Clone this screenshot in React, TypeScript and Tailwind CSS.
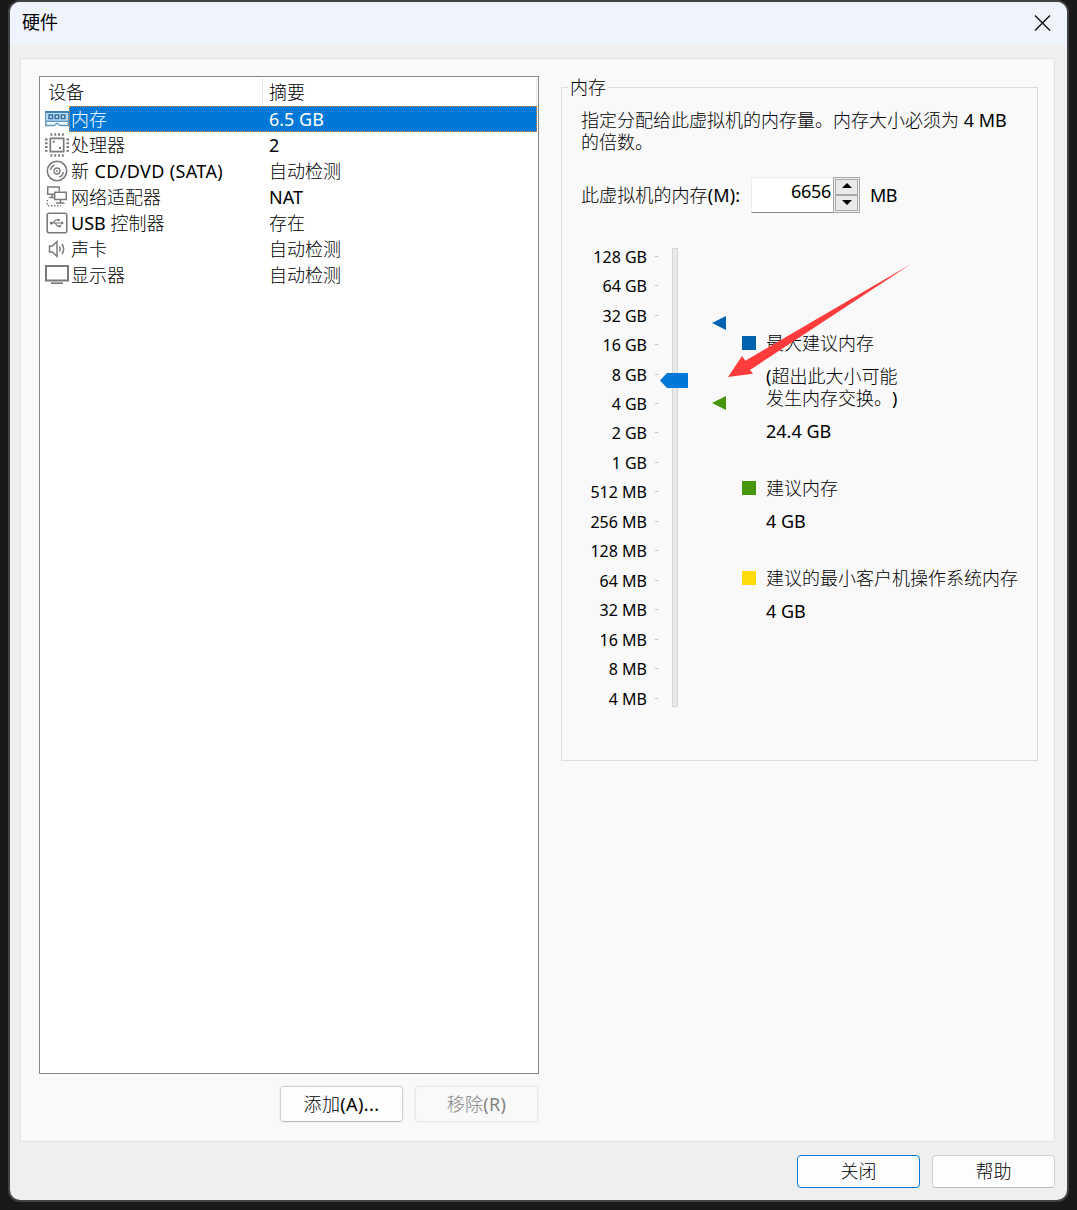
import { useState, type ReactNode } from 'react';

const SCALE = [
  '128 GB', '64 GB', '32 GB', '16 GB', '8 GB', '4 GB', '2 GB', '1 GB',
  '512 MB', '256 MB', '128 MB', '64 MB', '32 MB', '16 MB', '8 MB', '4 MB',
];

type Device = { name: string; summary: string; icon: ReactNode };

// Chinese runs are set lighter than the Latin text around them
function Label({ text }: { text: string }) {
  return (
    <>
      {text.split(/([\u3000-\u9fff]+)/).map((part, i) =>
        i % 2 ? (
          <span key={i} className="font-light">{part}</span>
        ) : (
          part
        )
      )}
    </>
  );
}

function MemoryIcon() {
  return (
    <svg width="24" height="26" viewBox="0 0 24 26" className="block">
      <path d="M.7 6h22.600v13.500h-8.300l-3-2.200-3 2.200H.7z" fill="#f4f9fc" stroke="#5f97c0" strokeWidth="1.400" />
      <path d="M0 5h24v2H0z" fill="#3f83b8" />
      <path d="M1.400 7h21.200v7.500H1.400z" fill="#b9dcf3" />
      <path d="M0 14.500h24V16H0z" fill="#5b9ac6" />
      <path d="M4 9h3.500v3.500H4zM10.200 9h3.500v3.500h-3.500zM16.400 9h3.500v3.500h-3.500z" fill="#d5ebf9" stroke="#34709f" strokeWidth="1.500" />
    </svg>
  );
}

function CpuIcon() {
  return (
    <svg width="24" height="26" viewBox="0 0 24 26" className="block" fill="none" stroke="#7b7b7b">
      <path d="M5.300 6.300h13.400v13.400H5.300z" strokeWidth="1.700" />
      <path d="M5.500 2.500h13.500M5.500 23.500h13.500" strokeWidth="2.600" strokeDasharray="1.900 1.900" />
      <path d="M1.300 6.500v13.500M22.700 6.500v13.500" strokeWidth="2.600" strokeDasharray="1.900 1.900" />
      <path d="M7.800 8.800h2v2h-2zM14 15h2v2h-2z" fill="#7b7b7b" stroke="none" />
    </svg>
  );
}

function DiscIcon() {
  return (
    <svg width="24" height="26" viewBox="0 0 24 26" className="block" fill="none" stroke="#7b7b7b" strokeWidth="1.600">
      <circle cx="12" cy="13" r="9.700" />
      <circle cx="12" cy="13" r="3" strokeWidth="1.300" />
      <circle cx="12" cy="13" r=".9" fill="#7b7b7b" stroke="none" />
      <path d="M5.500 11.800a6.700 6.700 0 0 1 4.200-5M18.500 14.200a6.700 6.700 0 0 1-4.200 5" strokeWidth="1.400" />
    </svg>
  );
}

function NetworkIcon() {
  return (
    <svg width="24" height="26" viewBox="0 0 24 26" className="block" fill="none" stroke="#7b7b7b" strokeWidth="1.500">
      <path d="M9 10.300H2.700V3h11.600v4.500M7 10.300v3M4 13.600h5" />
      <path d="M9.700 8.300h11.600v7.300H9.700zM15.500 15.600v3M11 18.900h8.500" />
      <path d="M2.300 16v5.700H16" strokeDasharray="1.500 1.600" />
    </svg>
  );
}

function UsbIcon() {
  return (
    <svg width="24" height="26" viewBox="0 0 24 26" className="block" fill="none" stroke="#7b7b7b">
      <rect x="2.200" y="3.200" width="19.600" height="19.600" rx="2" strokeWidth="1.600" />
      <path d="M6 13h11M8 13l2.500-3h3M10 13l2.500 3.200h2" strokeWidth="1.200" />
      <circle cx="6.300" cy="13" r="1.600" fill="#7b7b7b" stroke="none" />
      <circle cx="13.500" cy="10" r="1.300" fill="#7b7b7b" stroke="none" />
      <path d="M13.700 15h2.300v2.300h-2.300zM16.200 11l2.800 2-2.800 2z" fill="#7b7b7b" stroke="none" />
    </svg>
  );
}

function SoundIcon() {
  return (
    <svg width="24" height="26" viewBox="0 0 24 26" className="block" fill="none" stroke="#7b7b7b" strokeWidth="1.500">
      <path d="M4.500 10h3l4.500-4.500v15L7.500 16h-3z" />
      <path d="M14.500 10.300q1.600 2.700 0 5.400M17 8q3.300 5 0 10" />
    </svg>
  );
}

function DisplayIcon() {
  return (
    <svg width="24" height="26" viewBox="0 0 24 26" className="block" fill="none" stroke="#7b7b7b">
      <path d="M1 4h22v14.500H1z" strokeWidth="2" />
      <path d="M6 21.200h12" strokeWidth="1.700" />
    </svg>
  );
}

const DEVICES: Device[] = [
  { name: '内存', summary: '6.5 GB', icon: <MemoryIcon /> },
  { name: '处理器', summary: '2', icon: <CpuIcon /> },
  { name: '新 CD/DVD (SATA)', summary: '自动检测', icon: <DiscIcon /> },
  { name: '网络适配器', summary: 'NAT', icon: <NetworkIcon /> },
  { name: 'USB 控制器', summary: '存在', icon: <UsbIcon /> },
  { name: '声卡', summary: '自动检测', icon: <SoundIcon /> },
  { name: '显示器', summary: '自动检测', icon: <DisplayIcon /> },
];

function DeviceList({ selected, onSelect }: { selected: number; onSelect: (i: number) => void }) {
  return (
    <div className="h-[998px] w-[500px] border border-[#828790] bg-white">
      <div className="flex h-[29px] pt-px pr-px leading-[29px]">
        <div className="w-[223px] border-r border-[#e5e5e5] pl-2"><Label text="设备" /></div>
        <div className="flex-1 border-r border-[#e5e5e5] pl-1.5"><Label text="摘要" /></div>
      </div>
      {DEVICES.map((d, i) => (
        <div key={d.name} className="flex h-[26px] pr-px pl-[5px] leading-[26px]" onClick={() => onSelect(i)}>
          <div className="w-6 shrink-0">{d.icon}</div>
          <div
            className={
              i === selected
                ? 'flex flex-1 bg-[#0078d7] text-white outline-1 -outline-offset-1 outline-dotted outline-[#ff8728]'
                : 'flex flex-1'
            }
          >
            <div className={d.name.includes('CD') ? 'w-[200px] pl-0.5 tracking-[0.36px] whitespace-nowrap' : 'w-[200px] pl-0.5 whitespace-nowrap'}>
              <Label text={d.name} />
            </div>
            <div className="whitespace-nowrap"><Label text={d.summary} /></div>
          </div>
        </div>
      ))}
    </div>
  );
}

function Spinner({ value, onChange }: { value: number; onChange: (v: number) => void }) {
  return (
    <div className="flex h-9 w-[109px] border-t border-b border-l border-t-[#ececec] border-b-[#868686] border-l-[#ececec] bg-white">
      <div className="flex-1 pr-0.5 text-right leading-[27px] tracking-[-0.3px]">{value}</div>
      <div className="-my-px flex h-9 w-[27px] flex-col border border-[#a8a8a8] bg-[#f0f0f0] p-px">
        <button type="button" onClick={() => onChange(value + 4)} className="flex flex-1 items-center justify-center border border-[#a8a8a8] bg-[#eaeaea]">
          <svg width="10" height="5" viewBox="0 0 10 5" className="mb-1"><path d="M5 0l5 5H0z" /></svg>
        </button>
        <button type="button" onClick={() => onChange(value - 4)} className="flex flex-1 items-center justify-center border border-[#a8a8a8] bg-[#eaeaea]">
          <svg width="10" height="5" viewBox="0 0 10 5" className="mb-0.5"><path d="M5 5l5-5H0z" /></svg>
        </button>
      </div>
    </div>
  );
}

function MemorySlider() {
  return (
    <div className="flex">
      <div className="w-[77px] text-right text-base">
        {SCALE.map((s) => (
          <div key={s} className="flex h-[29.467px] items-center justify-end">
            <span className="w-[66px] leading-5 whitespace-nowrap">{s}</span>
            <span className="-mt-px ml-2 h-px w-[3px] shrink-0 bg-[#c4c4c4]" />
          </div>
        ))}
      </div>
      <div className="relative mt-[6px] ml-[14px] h-[459px] w-1.5 border border-[#d6d6d6] bg-[#e7eaea]">
        <svg width="28" height="15" viewBox="0 0 28 15" className="absolute top-[124px] -left-[13px]">
          <path d="M0 7.500L7 0h21v15H7z" fill="#0078d7" />
        </svg>
      </div>
      <div className="ml-[34px] w-[14px] pt-[74px]">
        <svg width="14" height="14" viewBox="0 0 14 14" className="block"><path d="M0 7l14-7v14z" fill="#0063b1" /></svg>
        <svg width="14" height="14" viewBox="0 0 14 14" className="mt-[66px] block"><path d="M0 7l14-7v14z" fill="#46960d" /></svg>
      </div>
    </div>
  );
}

function LegendItem({ swatch, children }: { swatch: string; children: ReactNode }) {
  return (
    <div className="flex leading-[22px]">
      <span className={`mt-1 h-[14px] w-[14px] shrink-0 ${swatch}`} />
      <div className="flex flex-col gap-[11px] pl-[10px] whitespace-nowrap">{children}</div>
    </div>
  );
}

function MemoryPanel() {
  const [memory, setMemory] = useState(6656);
  return (
    <div className="relative mt-[11px] h-[674px] w-[477px] border border-[#dcdcdc] pl-[19px]">
      <div className="absolute -top-[14px] left-[6px] bg-[#f9f9f9] px-0.5 leading-[26px]"><Label text="内存" /></div>
      <p className="pt-[21px] leading-[22px] whitespace-nowrap">
        <Label text="指定分配给此虚拟机的内存量。内存大小必须为 4 MB" />
        <br />
        <Label text="的倍数。" />
      </p>
      <div className="mt-[24px] flex items-center whitespace-nowrap">
        <div className="w-[170px] tracking-[0.1px]"><Label text="此虚拟机的内存(M):" /></div>
        <Spinner value={memory} onChange={setMemory} />
        <div className="pl-[10px] tracking-[-0.7px]">MB</div>
      </div>
      <div className="mt-[29px] flex">
        <MemorySlider />
        <div className="ml-[16px] flex flex-col pt-[90px]">
          <LegendItem swatch="bg-[#0063b1]">
            <div><Label text="最大建议内存" /></div>
            <div>
              <Label text="(超出此大小可能" />
              <br />
              <Label text="发生内存交换。)" />
            </div>
            <div>24.4 GB</div>
          </LegendItem>
          <div className="mt-[35px]">
            <LegendItem swatch="bg-[#46960d]">
              <div><Label text="建议内存" /></div>
              <div>4 GB</div>
            </LegendItem>
          </div>
          <div className="mt-[35px]">
            <LegendItem swatch="bg-[#ffda0a]">
              <div><Label text="建议的最小客户机操作系统内存" /></div>
              <div>4 GB</div>
            </LegendItem>
          </div>
        </div>
      </div>
    </div>
  );
}

export default function App() {
  const [selected, setSelected] = useState(0);
  return (
    <div className="relative h-[1210px] w-[1077px] overflow-hidden bg-[#191919] pl-2 text-[18px] text-black [font-family:'Noto_Sans','Noto_Sans_CJK_SC',sans-serif] [text-spacing-trim:space-all]">
      <div className="flex h-[1202px] w-[1061px] flex-col overflow-hidden rounded-[12px] border-2 border-[#424242] bg-[#efefef]">
        <header className="flex h-[43px] shrink-0 items-center justify-between bg-[#eff3fb] pr-4 pb-0.5 pl-3">
          <h1 className="leading-[41px] font-normal">硬件</h1>
          <svg width="17" height="16" viewBox="0 0 17 16" stroke="#111" strokeWidth="1.400"><path d="M1 .5l15 15M16 .5l-15 15" /></svg>
        </header>
        <main className="mt-[13px] ml-[10px] flex h-[1084px] w-[1035px] shrink-0 border border-[#e3e3e3] bg-[#f9f9f9] pt-[17px] pl-[18px]">
          <div className="w-[500px]">
            <DeviceList selected={selected} onSelect={setSelected} />
            <div className="mt-3 flex justify-end gap-3 pr-px">
              <button type="button" className="h-9 w-[123px] rounded border border-[#cfcfcf] border-b-[#bababa] bg-[#fdfdfd] tracking-[0.4px] outline-1 outline-[#f0f0f0]"><Label text="添加(A)..." /></button>
              <button type="button" disabled className="h-9 w-[123px] rounded border border-[#e8e8e8] bg-[#f9f9f9] tracking-[0.3px] text-[#838383] outline-1 outline-[#f0f0f0]"><Label text="移除(R)" /></button>
            </div>
          </div>
          <div className="ml-[22px]"><MemoryPanel /></div>
        </main>
        <footer className="mt-[13px] flex justify-end gap-3 pr-3">
          <button type="button" className="h-[33px] w-[123px] rounded border border-[#0078d4] bg-[#fdfdfd]"><Label text="关闭" /></button>
          <button type="button" className="h-[33px] w-[123px] rounded border border-[#d0d0d0] border-b-[#bababa] bg-[#fdfdfd]"><Label text="帮助" /></button>
        </footer>
      </div>
      <svg width="184" height="114" viewBox="0 0 184 114" className="pointer-events-none absolute top-[264px] left-[728px]">
        <path d="M0 113l14-21 3.300 4.700L183 0 22 106l3 3.700z" fill="#ff3b3b" />
      </svg>
    </div>
  );
}
